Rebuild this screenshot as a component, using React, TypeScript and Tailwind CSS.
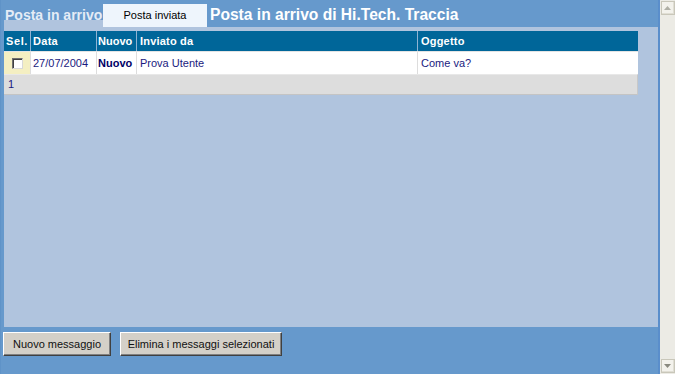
import * as React from "react"

const cols = [
  { key: "sel", label: "Sel.", w: "w-[26px]", pad: "pl-[2px] tracking-[0.6px]" },
  { key: "data", label: "Data", w: "w-[66px]", pad: "pl-[2px] tracking-[0.3px]" },
  { key: "nuovo", label: "Nuovo", w: "w-[40px]", pad: "pl-[1px]" },
  { key: "inviato", label: "Inviato da", w: "w-[281px]", pad: "pl-[3px] tracking-[0.2px]" },
  { key: "oggetto", label: "Oggetto", w: "flex-1", pad: "pl-[3px] tracking-[0.2px]" },
]

function Checkbox() {
  return (
    <div className="w-[11px] h-[11px] bg-white border border-t-[#707070] border-l-[#707070] border-b-[#d8d8d8] border-r-[#d8d8d8] shadow-[inset_1px_1px_0_#404040]" />
  )
}

function Button({ label, width }: { label: string; width: string }) {
  return (
    <button
      className={`${width} h-[24px] bg-[#d4d0c8] text-[11px] text-[#111] border border-t-white border-l-white border-b-[#404040] border-r-[#404040] shadow-[inset_-1px_-1px_0_#808080] flex items-center justify-center whitespace-nowrap`}
    >
      {label}
    </button>
  )
}

function ScrollArrow({ down }: { down?: boolean }) {
  return (
    <div className="w-[14px] h-[14px] bg-[#f3f2ec] border border-[#c9c7ba] shadow-[inset_-1px_-1px_0_#e0ded4] flex items-center justify-center">
      <svg width="7" height="4" viewBox="0 0 7 4">
        {down ? <polygon points="0,0 7,0 3.5,4" fill="#8a8a80" /> : <polygon points="0,4 7,4 3.5,0" fill="#b0b0a6" />}
      </svg>
    </div>
  )
}

export default function App() {
  return (
    <div className="flex w-[675px] h-[374px] overflow-hidden" style={{ fontFamily: "'Liberation Sans', Arial, sans-serif" }}>
      <div className="w-[658px] h-full bg-[#6699cc] flex flex-col border-l border-l-[#5f93c8]">
        {/* top bar with tabs and title */}
        <div className="flex h-[27px]">
          <div className="ml-[3px] w-[99px] flex flex-col">
            <div className="h-[20px] pl-[1px] pt-[3px] whitespace-nowrap">
              <span className="inline-block text-[14px] font-bold text-[#e4ecf6] leading-[14px] border-b border-b-[#e4ecf6]">Posta in arrivo</span>
            </div>
            <div className="flex-1 bg-[#b0c4de]" />
          </div>
          <div className="mt-[4px] w-[104px] h-[23px] bg-[#eef5fc] flex items-center justify-center text-[11px] text-black whitespace-nowrap">
            Posta inviata
          </div>
          <div className="ml-[3px] pt-[6px] text-[15.6px] font-bold text-white leading-[18px] whitespace-nowrap">
            Posta in arrivo di Hi.Tech. Traccia
          </div>
        </div>

        {/* content panel */}
        <div className="ml-[3px] w-[654px] h-[300px] bg-[#b0c4de] pt-[4px]">
          <div className="w-[634px]">
            <div className="flex h-[20px] bg-[#006699] text-white text-[11px] font-bold">
              {cols.map((c, i) => (
                <div key={c.key} className={`${c.w} ${c.pad} ${i > 0 ? "border-l border-l-[#8fb3d3]" : ""} flex items-center whitespace-nowrap overflow-hidden`}>
                  {c.label}
                </div>
              ))}
            </div>
            <div className="flex h-[23px] bg-white border-t border-t-[#e4e4e4] text-[11px] text-[#1a1a80]">
              <div className="w-[26px] bg-[#f4efc2] flex items-center justify-center">
                <Checkbox />
              </div>
              <div className="w-[66px] border-l border-l-[#dddddd] pl-[2px] flex items-center">27/07/2004</div>
              <div className="w-[40px] border-l border-l-[#dddddd] pl-[1px] flex items-center font-bold text-[#000066] whitespace-nowrap overflow-hidden">Nuovo</div>
              <div className="w-[281px] border-l border-l-[#dddddd] pl-[3px] flex items-center">Prova Utente</div>
              <div className="flex-1 border-l border-l-[#dddddd] pl-[3px] flex items-center">Come va?</div>
            </div>
            <div className="h-[21px] bg-[#dddddd] border-t border-t-[#e8e8e8] border-b border-b-[#c4c4c4] border-r border-r-[#c8c8c8] pl-[4px] flex items-center text-[11px] text-[#1a1a80]">
              1
            </div>
          </div>
        </div>

        {/* actions */}
        <div className="flex gap-[9px] pl-[2px] mt-[5px]">
          <Button label="Nuovo messaggio" width="w-[108px]" />
          <Button label="Elimina i messaggi selezionati" width="w-[162px]" />
        </div>
      </div>

      {/* scrollbar */}
      <div className="w-[2px] h-full bg-[#5a8ecb]" />
      <div className="w-[15px] h-full bg-[#ecebe5] flex flex-col justify-between items-center py-[1px]">
        <ScrollArrow />
        <ScrollArrow down />
      </div>
    </div>
  )
}
